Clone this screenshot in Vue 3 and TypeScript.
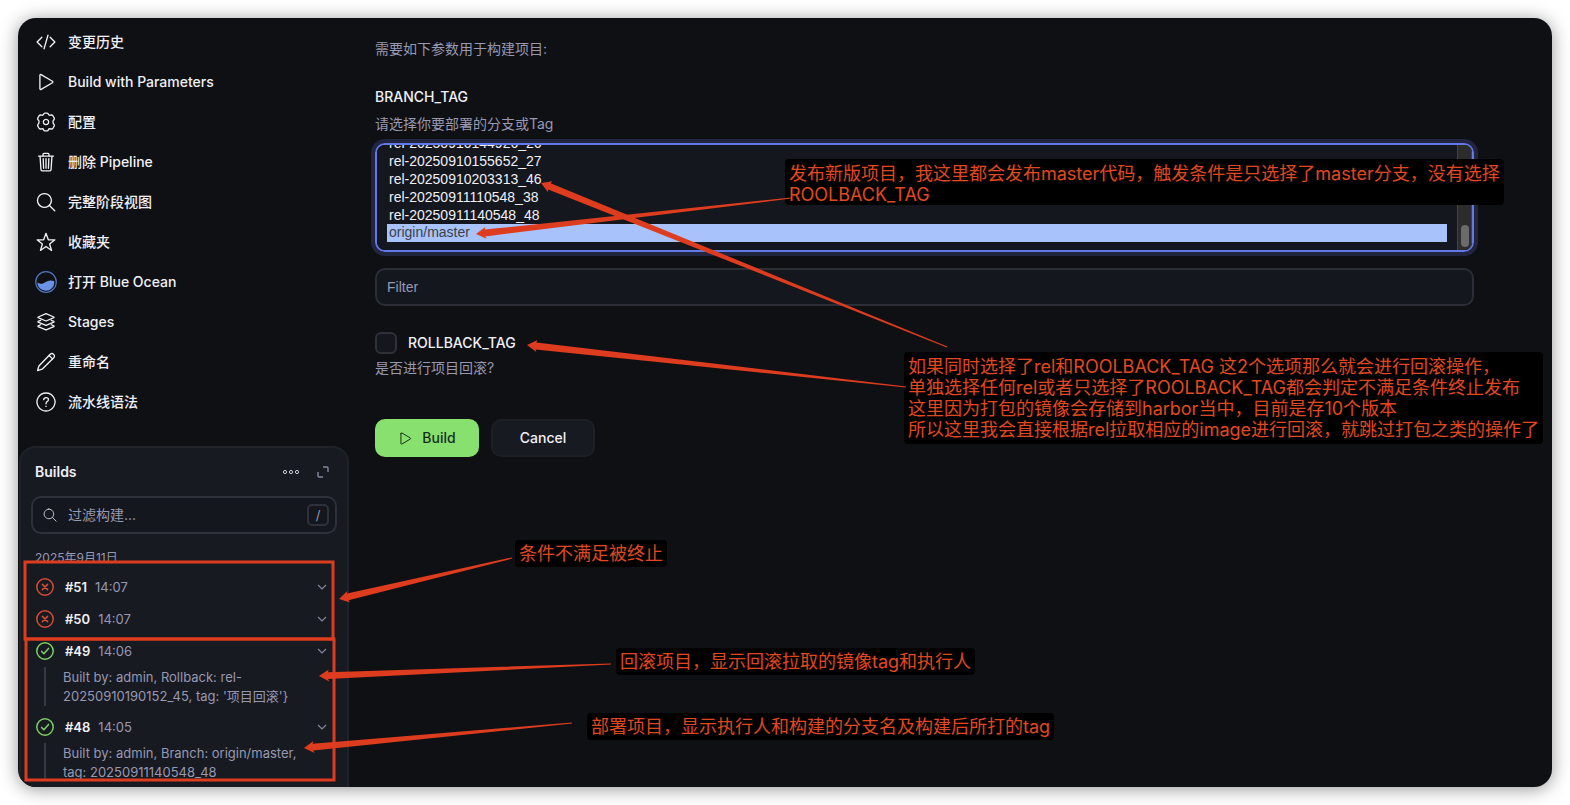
<script setup lang="ts">
import { nextTick, onMounted, ref } from 'vue'

interface MenuItem {
  label: string
  icon: string
}

interface BuildRow {
  id: number
  time: string
  ok: boolean
  note?: string
}

interface Point {
  x: number
  y: number
}

const menu: MenuItem[] = [
  { label: '变更历史', icon: 'code' },
  { label: 'Build with Parameters', icon: 'play' },
  { label: '配置', icon: 'gear' },
  { label: '删除 Pipeline', icon: 'trash' },
  { label: '完整阶段视图', icon: 'search' },
  { label: '收藏夹', icon: 'star' },
  { label: '打开 Blue Ocean', icon: 'ocean' },
  { label: 'Stages', icon: 'layers' },
  { label: '重命名', icon: 'pencil' },
  { label: '流水线语法', icon: 'help' },
]

const iconPaths: Record<string, string[]> = {
  code: ['M150 378L28 256l122-122', 'M362 378l122-122-122-122', 'M306 82l-100 348'],
  play: ['M100 84v344c0 17 17 26 31 18l290-172c13-8 13-28 0-36L131 66c-14-8-31 1-31 18z'],
  gear: [
    'M256 188a68 68 0 10.1 0z',
    'M226 30h60c20 0 26 12 32 28 8 22 28 30 50 24 26-8 52-4 68 20l28 46c12 22 6 44-10 58-16 14-20 30-20 50s4 36 20 50c16 14 22 36 10 58l-28 46c-16 24-42 28-68 20-22-6-42 2-50 24-6 16-12 28-32 28h-60c-20 0-26-12-32-28-8-22-28-30-50-24-26 8-52 4-68-20l-28-46c-12-22-6-44 10-58 16-14 20-30 20-50s-4-36-20-50c-16-14-22-36-10-58l28-46c16-24 42-28 68-20 22 6 42-2 50-24 6-16 12-28 32-28z',
  ],
  trash: [
    'M104 112l22 336c1 20 15 36 34 36h192c19 0 33-16 34-36l22-336',
    'M64 104h384',
    'M180 100V60c0-14 11-26 26-26h100c15 0 26 12 26 26v40',
    'M256 168v250M184 168l10 250M328 168l-10 250',
  ],
  search: ['M216 40a176 176 0 10.1 0z', 'M344 344l136 136'],
  star: ['M484 200H316L256 34l-60 166H28l136 108-50 164 142-102 142 102-50-164z'],
  layers: [
    'M256 42l200 86c10 5 10 13 0 18l-182 78c-12 5-24 5-36 0L56 146c-10-5-10-13 0-18z',
    'M120 212l-64 28c-10 5-10 13 0 18l182 78c12 5 24 5 36 0l182-78c10-5 10-13 0-18l-64-28',
    'M120 326l-64 28c-10 5-10 13 0 18l182 78c12 5 24 5 36 0l182-78c10-5 10-13 0-18l-64-28',
  ],
  pencil: ['M40 474l34-116L364 58c62-50 140 26 90 90L156 440z', 'M336 90l86 86'],
  help: [
    'M256 26a230 230 0 10.1 0z',
    'M196 196c4-36 30-54 62-54 34 0 60 22 60 54 0 50-62 48-62 104',
    'M256 362v6',
  ],
}

const tags: string[] = [
  'rel-20250908093012_08',
  'rel-20250908101544_09',
  'rel-20250908143107_11',
  'rel-20250908160925_12',
  'rel-20250909091840_14',
  'rel-20250909102233_15',
  'rel-20250909113651_17',
  'rel-20250909150419_19',
  'rel-20250909171102_20',
  'rel-20250910093358_21',
  'rel-20250910101726_22',
  'rel-20250910112049_23',
  'rel-20250910134415_24',
  'rel-20250910144926_26',
  'rel-20250910155652_27',
  'rel-20250910203313_46',
  'rel-20250911110548_38',
  'rel-20250911140548_48',
  'origin/master',
]

const builds: BuildRow[] = [
  { id: 51, time: '14:07', ok: false },
  { id: 50, time: '14:07', ok: false },
  { id: 49, time: '14:06', ok: true, note: "Built by: admin, Rollback: rel-20250910190152_45, tag: '项目回滚'}" },
  { id: 48, time: '14:05', ok: true, note: 'Built by: admin, Branch: origin/master, tag: 20250911140548_48' },
]

const selected = ref<string[]>(['origin/master'])
const rollback = ref(false)
const filter = ref('')
const search = ref('')
const branchList = ref<HTMLSelectElement | null>(null)

function arrow(tip: Point, tail: Point): string {
  const len = Math.hypot(tail.x - tip.x, tail.y - tip.y)
  const ux = (tail.x - tip.x) / len
  const uy = (tail.y - tip.y) / len
  const at = (along: number, side: number): string =>
    `${(tip.x + ux * along - uy * side).toFixed(1)},${(tip.y + uy * along + ux * side).toFixed(1)}`
  return [at(0, 0), at(10, 6), at(9, 3.4), at(len, 0.6), at(len, -0.6), at(9, -3.4), at(10, -6)].join(' ')
}

const arrows: string[] = [
  arrow({ x: 541, y: 183 }, { x: 947, y: 347 }),
  arrow({ x: 476, y: 234 }, { x: 791, y: 198 }),
  arrow({ x: 527, y: 345 }, { x: 906, y: 387 }),
  arrow({ x: 339, y: 599 }, { x: 512, y: 558 }),
  arrow({ x: 319, y: 676 }, { x: 611, y: 664 }),
  arrow({ x: 304, y: 748 }, { x: 572, y: 723 }),
]

onMounted(async () => {
  await nextTick()
  if (branchList.value) branchList.value.scrollTop = branchList.value.scrollHeight
})
</script>

<template>
  <div class="page">
    <div class="window">
      <aside class="sidebar">
        <nav class="menu">
          <a v-for="item in menu" :key="item.label" class="menu-item" href="#">
            <svg v-if="item.icon === 'ocean'" class="ocean" viewBox="0 0 22 22" aria-hidden="true">
              <circle cx="11" cy="11" r="10.3" fill="none" stroke="#4f73bd" stroke-width="1.2" />
              <path
                d="M2.3 11.3c1.6 1.2 3.2 1.7 5 1.4 3-.6 4.6-3.1 8-3.1 1.6 0 2.8.2 4 .6v1a8.5 8.5 0 01-17 .1z"
                fill="#6a93e6"
              />
            </svg>
            <svg v-else class="icon" viewBox="0 0 512 512" aria-hidden="true">
              <path v-for="d in iconPaths[item.icon]" :key="d" :d="d" />
            </svg>
            <span>{{ item.label }}</span>
          </a>
        </nav>

        <section class="builds">
          <header class="builds-head">
            <h2>Builds</h2>
            <button type="button" class="ghost" aria-label="More">
              <svg class="dots" viewBox="0 0 18 6">
                <circle cx="3" cy="3" r="1.6" />
                <circle cx="9" cy="3" r="1.6" />
                <circle cx="15" cy="3" r="1.6" />
              </svg>
            </button>
            <button type="button" class="ghost" aria-label="Expand">
              <svg class="expand" viewBox="0 0 12 12">
                <path d="M6 1h4a1 1 0 011 1v4M1 6v4a1 1 0 001 1h4" />
              </svg>
            </button>
          </header>
          <div class="search">
            <svg class="search-icon" viewBox="0 0 512 512" aria-hidden="true">
              <path v-for="d in iconPaths.search" :key="d" :d="d" />
            </svg>
            <input v-model="search" type="text" placeholder="过滤构建..." aria-label="过滤构建" />
            <kbd>/</kbd>
          </div>
          <div class="build-list">
            <p class="date">2025年9月11日</p>
            <div v-for="b in builds" :key="b.id">
              <div class="build-row">
                <svg class="status" :class="b.ok ? 'ok' : 'bad'" viewBox="0 0 18 18" aria-hidden="true">
                  <circle cx="9" cy="9" r="8.2" />
                  <path v-if="b.ok" d="M5.6 9.4l2.3 2.4 4.6-5.4" />
                  <path v-else d="M6.4 6.4l5.2 5.2M11.6 6.4l-5.2 5.2" />
                </svg>
                <a href="#" class="build-id">#{{ b.id }}</a>
                <span class="time">{{ b.time }}</span>
                <button type="button" class="ghost chevron" aria-label="Menu">
                  <svg viewBox="0 0 10 6"><path d="M1 1l4 4 4-4" /></svg>
                </button>
              </div>
              <p v-if="b.note" class="note">{{ b.note }}</p>
            </div>
          </div>
        </section>
      </aside>

      <main class="main">
        <p class="muted intro">需要如下参数用于构建项目:</p>
        <form class="form" @submit.prevent>
          <label class="name" for="branch">BRANCH_TAG</label>
          <p class="muted hint">请选择你要部署的分支或Tag</p>
          <div class="branch-wrap">
            <select id="branch" ref="branchList" v-model="selected" class="branch" multiple size="5">
              <option v-for="t in tags" :key="t" :value="t">{{ t }}</option>
            </select>
            <span class="track" aria-hidden="true"><span class="thumb"></span></span>
          </div>
          <input v-model="filter" class="filter" type="text" placeholder="Filter" aria-label="Filter" />
          <div class="check-row">
            <input id="rollback" v-model="rollback" type="checkbox" />
            <label class="name" for="rollback">ROLLBACK_TAG</label>
          </div>
          <p class="muted">是否进行项目回滚?</p>
          <div class="actions">
            <button type="submit" class="btn primary">
              <svg class="icon" viewBox="0 0 512 512" aria-hidden="true">
                <path v-for="d in iconPaths.play" :key="d" :d="d" />
              </svg>
              Build
            </button>
            <button type="button" class="btn">Cancel</button>
          </div>
        </form>
      </main>
    </div>

    <p class="callout publish">发布新版项目，我这里都会发布master代码，触发条件是只选择了master分支，没有选择<br />ROOLBACK_TAG</p>
    <p class="callout rules">
      如果同时选择了rel和ROOLBACK_TAG 这2个选项那么就会进行回滚操作，<br />
      单独选择任何rel或者只选择了ROOLBACK_TAG都会判定不满足条件终止发布<br />
      这里因为打包的镜像会存储到harbor当中，目前是存10个版本<br />
      所以这里我会直接根据rel拉取相应的image进行回滚，就跳过打包之类的操作了
    </p>
    <p class="callout aborted">条件不满足被终止</p>
    <p class="callout rolled">回滚项目，显示回滚拉取的镜像tag和执行人</p>
    <p class="callout deployed">部署项目，显示执行人和构建的分支名及构建后所打的tag</p>
    <svg class="marks" width="1570" height="805" aria-hidden="true">
      <rect x="25" y="562" width="308" height="77" />
      <rect x="26" y="639" width="308" height="141" />
      <polygon v-for="p in arrows" :key="p" :points="p" />
    </svg>
  </div>
</template>

<style>
body {
  margin: 0;
  background: #fff;
}
</style>

<style scoped>
.page {
  position: relative;
  box-sizing: border-box;
  height: 100vh;
  padding: 18px;
  overflow: hidden;
  font-family: Inter, 'Noto Sans CJK SC', sans-serif;
  font-size: 14px;
  line-height: 22px;
  color: #f0f0f6;
}
p,
h2 {
  margin: 0;
}
button,
input,
select {
  font: inherit;
  color: inherit;
}
svg {
  display: block;
  flex: none;
}
.window {
  display: flex;
  height: 100%;
  overflow: hidden;
  border-radius: 18px;
  background: #0f1014;
  box-shadow: 0 2px 18px rgba(0, 0, 0, 0.42);
}
.sidebar {
  display: flex;
  flex: none;
  flex-direction: column;
  width: 330px;
  padding: 4px 0 0 1px;
}
.menu-item {
  display: flex;
  align-items: center;
  gap: 12px;
  height: 40px;
  padding-left: 17px;
  font-weight: 500;
  color: inherit;
  text-decoration: none;
}
.icon {
  width: 20px;
  height: 20px;
}
.icon path,
.search-icon path {
  fill: none;
  stroke: currentColor;
  stroke-width: 34;
  stroke-linecap: round;
  stroke-linejoin: round;
}
.ocean {
  width: 22px;
  height: 22px;
  margin: 0 -1px;
}
.builds {
  display: flex;
  flex: 1;
  flex-direction: column;
  min-height: 0;
  margin-top: 24px;
  border: 2px solid #202229;
  border-bottom: 0;
  border-radius: 16px 16px 0 0;
  background: #181a21;
}
.builds-head {
  display: flex;
  align-items: center;
  gap: 17px;
  height: 48px;
  padding: 0 18px 0 14px;
}
.builds-head h2 {
  flex: 1;
  font-size: 14px;
  font-weight: 600;
}
.ghost {
  padding: 0;
  border: 0;
  background: none;
}
.dots {
  width: 18px;
  height: 6px;
  fill: none;
  stroke: #c9cad8;
  stroke-width: 1;
}
.expand {
  width: 12px;
  height: 12px;
  fill: none;
  stroke: #85869c;
  stroke-width: 1.4;
}
.search {
  display: flex;
  align-items: center;
  box-sizing: border-box;
  height: 38px;
  margin: 0 10px;
  padding: 0 6px 0 10px;
  border: 2px solid #2e303a;
  border-radius: 10px;
  background: #14171e;
}
.search-icon {
  width: 14px;
  height: 14px;
  color: #d0d1dc;
}
.search input {
  flex: 1;
  min-width: 0;
  padding: 0 0 0 11px;
  border: 0;
  outline: 0;
  background: none;
}
input::placeholder {
  color: #9798b2;
  opacity: 1;
}
kbd {
  box-sizing: border-box;
  width: 22px;
  height: 22px;
  border: 2px solid #2e303a;
  border-radius: 5px;
  font-family: inherit;
  font-size: 13px;
  line-height: 18px;
  text-align: center;
  color: #9798b2;
}
.build-list {
  flex: 1;
  min-height: 0;
  margin: 11px 0 8px;
  overflow: hidden;
  font-size: 13px;
  color: #9798b2;
}
.date {
  padding-left: 14px;
  font-size: 12px;
  line-height: 26px;
}
.build-row {
  display: flex;
  align-items: center;
  height: 32px;
  padding: 0 20px 0 15px;
}
.status {
  width: 18px;
  height: 18px;
  fill: none;
  stroke-width: 1.5;
  stroke-linecap: round;
  stroke-linejoin: round;
}
.ok {
  stroke: #7ccf64;
}
.bad {
  stroke: #d54c33;
}
.build-id {
  margin: 0 8px 0 11px;
  font-weight: 600;
  color: #f0f0f6;
  text-decoration: none;
}
.time {
  flex: 1;
}
.chevron svg {
  width: 10px;
  height: 6px;
  fill: none;
  stroke: #85869c;
  stroke-width: 1.2;
}
.note {
  margin: 0 28px 5px 23px;
  padding: 1px 0 0 17px;
  border-left: 2px solid #363844;
  line-height: 19px;
}
.main {
  flex: 1;
  min-width: 0;
  padding: 20px 78px 0 26px;
}
.muted {
  color: #9798b2;
}
.form {
  display: flex;
  flex-direction: column;
  margin-top: 26px;
}
.name {
  font-weight: 500;
}
.hint {
  margin: 5px 0 8px;
}
.branch-wrap {
  position: relative;
}
.branch {
  display: block;
  box-sizing: border-box;
  width: 100%;
  height: 109px;
  padding: 8px 25px 8px 10px;
  border: 2px solid #6379e8;
  border-radius: 10px;
  outline: 0;
  background: #14171e;
  box-shadow: 0 0 0 4px #212540;
  font: 14px 'Liberation Sans', Arial, sans-serif;
  scrollbar-width: none;
}
.branch option {
  padding: 0 2px 1px;
}
.branch option:checked {
  background: #a8c3fb linear-gradient(#a8c3fb, #a8c3fb);
  color: #3c3f48;
}
.track {
  position: absolute;
  top: 2px;
  right: 2px;
  bottom: 2px;
  display: flex;
  align-items: flex-end;
  justify-content: center;
  box-sizing: border-box;
  width: 15px;
  padding-bottom: 3px;
  border: solid #434343;
  border-width: 0 1px;
  border-radius: 0 7px 7px 0;
  background: #2c2c2c;
  pointer-events: none;
}
.thumb {
  width: 8px;
  height: 22px;
  border-radius: 4px;
  background: #6b6b6b;
}
.filter {
  box-sizing: border-box;
  width: 100%;
  height: 38px;
  margin-top: 16px;
  padding: 0 10px;
  border: 2px solid #2b2d37;
  border-radius: 10px;
  background: #14171e;
  font-family: 'Liberation Sans', Arial, sans-serif;
}
.check-row {
  display: flex;
  align-items: center;
  gap: 11px;
  margin: 26px 0 3px;
}
.check-row input {
  appearance: none;
  box-sizing: border-box;
  width: 22px;
  height: 22px;
  margin: 0;
  border: 2px solid #2e303a;
  border-radius: 6px;
  background: #14171e;
}
.check-row input:checked {
  background: #6379e8;
}
.actions {
  display: flex;
  gap: 12px;
  margin-top: 40px;
}
.btn {
  display: flex;
  align-items: center;
  justify-content: center;
  gap: 9px;
  box-sizing: border-box;
  width: 104px;
  height: 38px;
  padding: 0;
  border: 2px solid #1d1f26;
  border-radius: 10px;
  background: #181a21;
  font-weight: 500;
}
.primary {
  border-color: #88e06e;
  background: #88e06e;
  color: #18301a;
}
.btn .icon {
  width: 15px;
  height: 15px;
}
.callout {
  position: absolute;
  padding: 3px 4px;
  border-radius: 4px;
  background: #000;
  font-size: 18px;
  line-height: 21px;
  white-space: nowrap;
  color: #e0491f;
}
.publish {
  top: 159px;
  left: 785px;
  padding: 4px 4px 0;
}
.rules {
  top: 352px;
  left: 904px;
  padding: 4px;
}
.aborted {
  top: 540px;
  left: 515px;
}
.rolled {
  top: 648px;
  left: 616px;
}
.deployed {
  top: 713px;
  left: 587px;
}
.marks {
  position: absolute;
  top: 0;
  left: 0;
  fill: #dd3c1e;
  pointer-events: none;
}
.marks rect {
  fill: none;
  stroke: #dd3c1e;
  stroke-width: 3;
}
</style>
